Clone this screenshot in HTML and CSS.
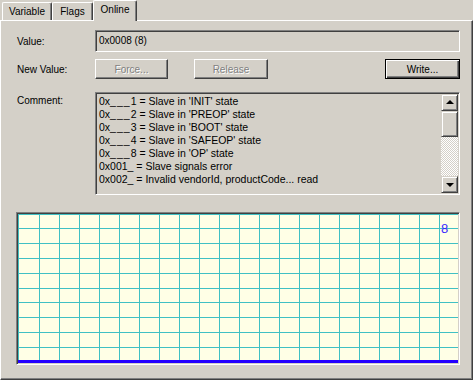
FILE: index.html
```html
<!DOCTYPE html>
<html lang="en">
<head>
    <meta charset="UTF-8">
    <title>Online</title>
    <link rel="stylesheet" href="styles.css">
</head>
<body>
    <div class="tabs">
        <div class="tab tab-variable">Variable</div>
        <div class="tab tab-flags">Flags</div>
        <div class="tab tab-online active">Online</div>
    </div>

    <div class="panel">
        <div class="row row-value">
            <span class="label">Value:</span>
            <div class="field">0x0008 (8)</div>
        </div>

        <div class="row row-new">
            <span class="label">New Value:</span>
            <button class="btn btn-force" disabled>Force...</button>
            <button class="btn btn-release" disabled>Release</button>
            <button class="btn btn-write default">Write...</button>
        </div>

        <div class="row row-comment">
            <span class="label">Comment:</span>
            <div class="listbox">
                <div class="lines">
                    <div>0x<span class="us">___</span>1 = Slave in 'INIT' state</div>
                    <div>0x<span class="us">___</span>2 = Slave in 'PREOP' state</div>
                    <div>0x<span class="us">___</span>3 = Slave in 'BOOT' state</div>
                    <div>0x<span class="us">___</span>4 = Slave in 'SAFEOP' state</div>
                    <div>0x<span class="us">___</span>8 = Slave in 'OP' state</div>
                    <div>0x001_ = Slave signals error</div>
                    <div>0x002_ = Invalid vendorId, productCode... read</div>
                </div>
                <div class="scrollbar">
                    <div class="sb-btn"><span class="arrow-up"></span></div>
                    <div class="sb-thumb"></div>
                    <div class="sb-track"></div>
                    <div class="sb-btn"><span class="arrow-down"></span></div>
                </div>
            </div>
        </div>

        <div class="graph">
            <svg width="440" height="149" viewBox="0 0 440 149" shape-rendering="crispEdges">
                <rect x="0" y="0" width="440" height="149" fill="#ffffe6"/>
                <!-- vertical grid -->
                <path stroke="#40c0c4" stroke-width="1" fill="none"
                      d="M0.5 0V146M21.5 0V146M41.5 0V146M61.5 0V146M81.5 0V146M101.5 0V146M121.5 0V146M141.5 0V146M161.5 0V146M181.5 0V146M201.5 0V146M221.5 0V146M241.5 0V146M261.5 0V146M281.5 0V146M301.5 0V146M321.5 0V146M341.5 0V146M361.5 0V146M381.5 0V146M401.5 0V146M421.5 0V146"/>
                <!-- horizontal grid -->
                <path stroke="#40c0c4" stroke-width="1" fill="none"
                      d="M0 0.5H440M0 14.5H440M0 29.5H440M0 44.5H440M0 59.5H440M0 74.5H440M0 88.5H440M0 103.5H440M0 118.5H440M0 133.5H440"/>
                <!-- value trace -->
                <rect x="0" y="146" width="440" height="3" fill="#2400ff"/>
            </svg>
            <span class="graph-value">8</span>
        </div>
    </div>
</body>
</html>
```

FILE: styles.css
```css
* {
    box-sizing: border-box;
}
body {
    margin: 0;
    width: 473px;
    height: 380px;
    overflow: hidden;
    background: #d4d0c8;
    color: #000;
    font-family: "Liberation Sans", Arial, sans-serif;
    font-size: 10px;
}

/* tab strip */
.tabs {
    display: flex;
    align-items: flex-end;
    height: 20px;
    padding-left: 2px;
}
.tab {
    height: 18px;
    border-top: 1px solid #fff;
    border-left: 1px solid #fff;
    border-right: 1px solid #404040;
    border-radius: 2px 2px 0 0;
    box-shadow: inset -1px 0 #808080;
    background: #d4d0c8;
    text-align: center;
    line-height: 17px;
}
.tab-variable { width: 50px; }
.tab-flags { width: 41px; }
.tab-online { width: 44px; }
.tab.active {
    position: relative;
    z-index: 1;
    height: 21px;
    margin-bottom: -1px;
}

/* page */
.panel {
    height: 360px;
    border: 1px solid;
    border-color: #fff #404040 #404040 #fff;
    box-shadow: inset -1px -1px #808080;
    padding: 9px 0 0 14px;
}
.row {
    display: flex;
    align-items: center;
}
.label {
    flex: none;
    width: 80px;
    padding-left: 2px;
}
.row-new { margin-top: 7px; width: 445px; }
.row-comment { margin-top: 13px; align-items: flex-start; }
.row-comment .label {
    padding-top: 2px;
    line-height: 13px;
}

/* sunken boxes */
.field, .listbox, .graph {
    border: 1px solid;
    border-color: #808080 #fff #fff #808080;
    box-shadow: inset 1px 1px #404040, inset -1px -1px #d4d0c8;
}
.field {
    width: 365px;
    height: 22px;
    padding-left: 3px;
    line-height: 20px;
}

/* buttons */
.btn {
    height: 20px;
    padding: 0;
    border: 1px solid;
    border-color: #fff #404040 #404040 #fff;
    box-shadow: inset -1px -1px #808080;
    background: #d4d0c8;
    font-family: inherit;
    font-size: 10px;
    color: #000;
}
.btn:disabled {
    color: #808080;
    text-shadow: 1px 1px #fff;
}
.btn-force { width: 73px; }
.btn-release { width: 74px; margin-left: 26px; }
.btn-write { width: 75px; margin-left: auto; }
.btn.default {
    border-color: #000;
    box-shadow: inset 1px 1px #fff, inset -1px -1px #404040, inset -2px -2px #808080;
}

/* comment list */
.listbox {
    display: flex;
    width: 365px;
    height: 103px;
    padding: 1px;
}
.lines {
    flex: 1;
    padding: 1px 0 0 2px;
    font-size: 10.5px;
    line-height: 13px;
    white-space: nowrap;
    overflow: hidden;
}
.us {
    letter-spacing: 1px;
}
.scrollbar {
    display: flex;
    flex-direction: column;
    width: 17px;
}
.sb-btn, .sb-thumb {
    border: 1px solid;
    border-color: #d4d0c8 #404040 #404040 #d4d0c8;
    box-shadow: inset 1px 1px #fff, inset -1px -1px #808080;
    background: #d4d0c8;
}
.sb-btn {
    height: 17px;
    display: flex;
    align-items: center;
    justify-content: center;
}
.sb-thumb {
    height: 26px;
}
.sb-track {
    flex: 1;
    background: repeating-conic-gradient(#fff 0 25%, #d4d0c8 0 50%) 0 0 / 2px 2px;
}
.arrow-up, .arrow-down {
    width: 0;
    height: 0;
    border-left: 4px solid transparent;
    border-right: 4px solid transparent;
}
.arrow-up {
    border-bottom: 4px solid #000;
    margin-top: -1px;
}
.arrow-down {
    border-top: 4px solid #000;
}

/* graph */
.graph {
    position: relative;
    width: 444px;
    height: 153px;
    margin: 17px 0 0 1px;
    padding: 1px;
}
.graph svg {
    display: block;
}
.graph-value {
    position: absolute;
    left: 424px;
    top: 8px;
    font-size: 13px;
    line-height: 15px;
    color: #3c28ff;
}
```
